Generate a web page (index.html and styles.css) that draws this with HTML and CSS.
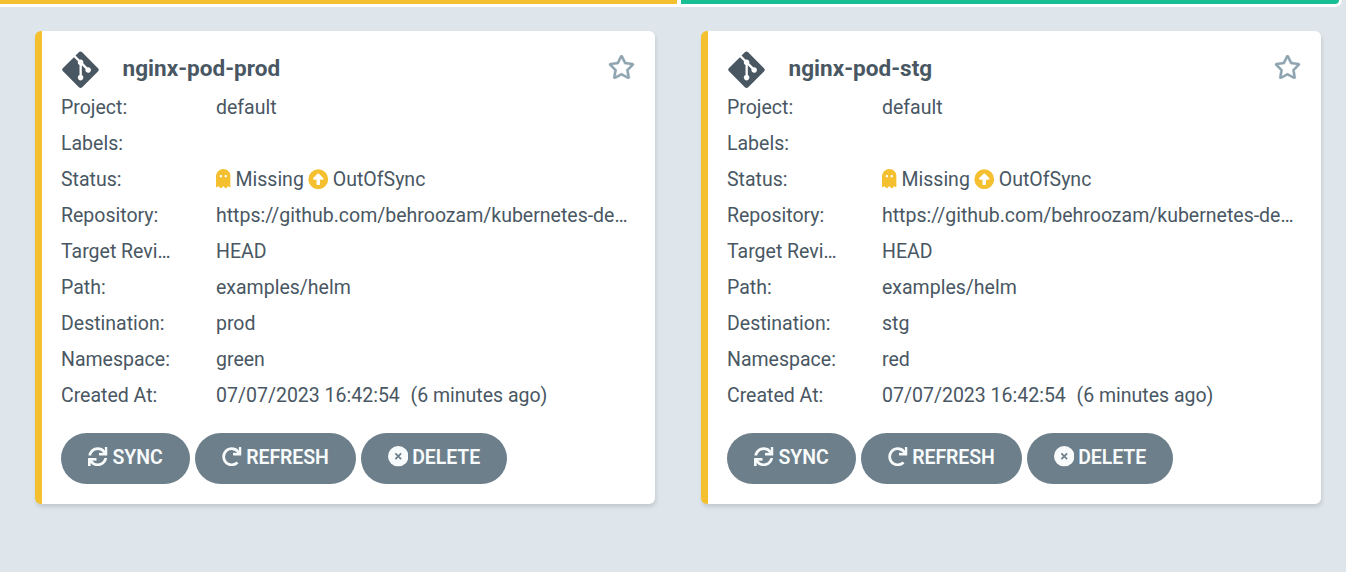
FILE: index.html
```
<!DOCTYPE html>
<html lang="en">
<head>
<meta charset="utf-8">
<title>Applications</title>
<link rel="stylesheet" href="styles.css">
</head>
<body>
<svg class="sprite" aria-hidden="true">
<symbol id="git" viewBox="0 0 448 512"><path d="M439.55 236.05L244 40.45a28.87 28.87 0 0 0-40.81 0l-40.66 40.63 51.52 51.52c27.06-9.14 52.68 16.77 43.39 43.68l49.66 49.66c34.23-11.8 61.18 31 35.47 56.69-26.49 26.49-70.21-2.87-56-37.34L240.22 199v121.85c25.3 12.54 22.26 41.85 9.08 55a34.34 34.34 0 0 1-48.55 0c-17.57-17.6-11.07-46.91 11.25-56v-123c-20.8-8.51-24.6-30.74-18.64-45L142.57 101 8.45 235.14a28.86 28.86 0 0 0 0 40.81l195.61 195.6a28.86 28.86 0 0 0 40.8 0l194.69-194.69a28.86 28.86 0 0 0 0-40.81z"/></symbol>
<symbol id="star" viewBox="0 0 576 512"><path d="M528.1 171.5L382 150.2 316.7 17.8c-11.7-23.6-45.6-23.9-57.4 0L194 150.2 47.9 171.5c-26.2 3.8-36.7 36.1-17.7 54.6l105.7 103-25 145.5c-4.5 26.3 23.2 46 46.4 33.7L288 439.6l130.7 68.7c23.2 12.2 50.9-7.4 46.4-33.7l-25-145.5 105.7-103c19-18.5 8.5-50.8-17.7-54.6zM388.6 312.3l23.7 138.4L288 385.4l-124.3 65.3 23.7-138.4-100.6-98 139-20.2 62.2-126 62.2 126 139 20.2-100.6 98z"/></symbol>
<symbol id="ghost" viewBox="0 0 384 512"><path d="M186.1.09C81.01 3.24 0 94.92 0 200.05v263.92c0 14.26 17.23 21.39 27.31 11.31l24.92-18.53c6.66-4.95 16-3.99 21.51 2.21l42.95 48.35c6.25 6.25 16.38 6.25 22.63 0l40.72-45.85c6.37-7.17 17.56-7.17 23.92 0l40.72 45.85c6.25 6.25 16.38 6.25 22.63 0l42.95-48.35c5.51-6.2 14.85-7.17 21.51-2.21l24.92 18.53c10.08 10.08 27.31 2.94 27.31-11.31V192C384 84 294.83-3.17 186.1.09zM128 224c-17.67 0-32-14.33-32-32s14.33-32 32-32 32 14.33 32 32-14.33 32-32 32zm128 0c-17.67 0-32-14.33-32-32s14.33-32 32-32 32 14.33 32 32-14.33 32-32 32z"/></symbol>
<symbol id="up" viewBox="0 0 512 512"><path fill-rule="evenodd" d="M256 8a248 248 0 1 0 0 496 248 248 0 1 0 0-496zM256 112q9 0 17 7l107 108q12 16 0 30l-10 8q-8 6-17 3h-54v112q0 20-20 20h-46q-20 0-20-20V268h-54q-9 3-17-3l-10-8q-12-14 0-30l107-108q8-7 17-7z"/></symbol>
<symbol id="sync" viewBox="0 0 512 512"><path d="M440.65 12.57l4 82.77A247.16 247.16 0 0 0 255.83 8C134.73 8 33.91 94.92 12.29 209.82A12 12 0 0 0 24.09 224h49.05a12 12 0 0 0 11.67-9.26 175.91 175.91 0 0 1 317-56.94l-101.46-4.86a12 12 0 0 0-12.57 12v47.41a12 12 0 0 0 12 12H500a12 12 0 0 0 12-12V12a12 12 0 0 0-12-12h-47.37a12 12 0 0 0-11.98 12.57zM255.83 432a175.61 175.61 0 0 1-146-77.8l101.8 4.87a12 12 0 0 0 12.57-12v-47.4a12 12 0 0 0-12-12H12a12 12 0 0 0-12 12V500a12 12 0 0 0 12 12h47.35a12 12 0 0 0 12-12.6l-4.15-82.57A247.17 247.17 0 0 0 255.83 504c121.11 0 221.93-86.92 243.55-201.82a12 12 0 0 0-11.8-14.18h-49.05a12 12 0 0 0-11.67 9.26A175.86 175.86 0 0 1 255.83 432z"/></symbol>
<symbol id="redo" viewBox="0 0 512 512"><path d="M500.33 0h-47.41a12 12 0 0 0-12 12.57l4 82.76A247.42 247.42 0 0 0 256 8C119.34 8 7.9 119.53 8 256.19 8.1 393.07 119.1 504 256 504a247.1 247.1 0 0 0 166.18-63.91 12 12 0 0 0 .48-17.43l-34-34a12 12 0 0 0-16.38-.55A176 176 0 1 1 402.1 157.8l-101.53-4.87a12 12 0 0 0-12.57 12v47.41a12 12 0 0 0 12 12h200.33a12 12 0 0 0 12-12V12a12 12 0 0 0-12-12z"/></symbol>
<symbol id="times" viewBox="0 0 20 20"><circle cx="10" cy="10" r="10"/><path d="M7.2 7.2l5.6 5.6M12.8 7.2l-5.6 5.6" stroke="#6d7f8b" stroke-width="1.7"/></symbol>
</svg>
<div class="health-bar"><div class="health-missing"></div><div class="health-ok"></div></div>
<main class="tiles">
<article class="tile">
<header class="tile-head"><svg class="git"><use href="#git"/></svg><h2 class="title">nginx-pod-prod</h2><svg class="star"><use href="#star"/></svg></header>
<dl class="fields">
<dt>Project:</dt><dd>default</dd>
<dt>Labels:</dt><dd></dd>
<dt>Status:</dt><dd class="status"><svg class="ghost"><use href="#ghost"/></svg><span class="health">Missing</span><svg class="up"><use href="#up"/></svg><span>OutOfSync</span></dd>
<dt>Repository:</dt><dd>https://github.com/behroozam/kubernetes-de…</dd>
<dt>Target Revi…</dt><dd>HEAD</dd>
<dt>Path:</dt><dd>examples/helm</dd>
<dt>Destination:</dt><dd>prod</dd>
<dt>Namespace:</dt><dd>green</dd>
<dt>Created At:</dt><dd>07/07/2023 16:42:54 &nbsp;<span class="age">(6 minutes ago)</span></dd>
</dl>
<div class="actions"><button class="btn sync"><svg><use href="#sync"/></svg>SYNC</button><button class="btn refresh"><svg><use href="#redo"/></svg>REFRESH</button><button class="btn delete"><svg><use href="#times"/></svg>DELETE</button></div>
</article>
<article class="tile">
<header class="tile-head"><svg class="git"><use href="#git"/></svg><h2 class="title">nginx-pod-stg</h2><svg class="star"><use href="#star"/></svg></header>
<dl class="fields">
<dt>Project:</dt><dd>default</dd>
<dt>Labels:</dt><dd></dd>
<dt>Status:</dt><dd class="status"><svg class="ghost"><use href="#ghost"/></svg><span class="health">Missing</span><svg class="up"><use href="#up"/></svg><span>OutOfSync</span></dd>
<dt>Repository:</dt><dd>https://github.com/behroozam/kubernetes-de…</dd>
<dt>Target Revi…</dt><dd>HEAD</dd>
<dt>Path:</dt><dd>examples/helm</dd>
<dt>Destination:</dt><dd>stg</dd>
<dt>Namespace:</dt><dd>red</dd>
<dt>Created At:</dt><dd>07/07/2023 16:42:54 &nbsp;<span class="age">(6 minutes ago)</span></dd>
</dl>
<div class="actions"><button class="btn sync"><svg><use href="#sync"/></svg>SYNC</button><button class="btn refresh"><svg><use href="#redo"/></svg>REFRESH</button><button class="btn delete"><svg><use href="#times"/></svg>DELETE</button></div>
</article>
</main>
</body>
</html>
```
FILE: styles.css
```
* { box-sizing: border-box; }
body {
  margin: 0;
  height: 572px;
  overflow: hidden;
  background: #dee6eb;
  color: #495763;
  font-family: Roboto, "Liberation Sans", sans-serif;
  font-size: 19.5px;
}
svg { display: block; flex: none; fill: currentColor; }
.sprite { position: absolute; width: 0; height: 0; }
.health-bar {
  display: flex;
  gap: 4px;
  width: 1342px;
  height: 7px;
  padding: 0 3px 3px 0;
  background: #fff;
  border-bottom-right-radius: 9px;
}
.health-missing { width: 677px; background: #f4c030; }
.health-ok { flex: 1; background: #18be94; border-bottom-right-radius: 6px; }
.tiles { display: flex; gap: 46px; padding: 24px 25px 0 35px; }
.tile {
  width: 620px;
  height: 473px;
  padding: 17px 20px 0 19px;
  border-left: 7px solid #f4c030;
  border-radius: 6px;
  background: #fff;
  box-shadow: 1px 3px 4px rgba(0, 0, 0, .12);
}
.tile-head { display: flex; align-items: center; height: 42px; }
.git { width: 37px; height: 41.5px; margin: 2.2px 0 0 1px; }
.title { flex: 1; margin: 0 0 0 23.6px; font-size: 22.55px; font-weight: 700; line-height: 41px; padding-bottom: 1px; }
.star { width: 27px; height: 24px; margin: 0 .5px 5px 0; color: #8fa4b1; stroke: currentColor; stroke-width: 8px; }
.fields {
  display: grid;
  grid-template-columns: 110px 414px;
  column-gap: 45px;
  grid-auto-rows: 36px;
  margin: 0;
  line-height: 36px;
}
.fields dt, .fields dd { margin: 0; white-space: nowrap; }
.fields .status { display: flex; align-items: center; }
.ghost { width: 14.6px; height: 19.5px; color: #f4c030; margin: 0 4.9px 2px 0; }
.up { width: 20.5px; height: 20.5px; color: #f4c030; margin: 0 4.3px 2px 4.2px; }
.age { margin-left: 1px; }
.actions { display: flex; gap: 5px; margin-top: 19px; }
.btn {
  display: flex;
  align-items: center;
  justify-content: center;
  height: 51px;
  padding: 0 0 2px;
  border: 0;
  border-radius: 26px;
  background: #6d7f8b;
  color: #f8fbfb;
  font: 600 19.5px/49px Roboto, "Liberation Sans", sans-serif;
  letter-spacing: -.08px;
}
.btn svg { width: 19.5px; height: 19.5px; margin: 0 4.5px 2px 0; }
.btn.delete svg { width: 20.5px; height: 20.5px; margin-right: 3.8px; }
.sync { width: 129px; }
.refresh { width: 161px; }
.delete { width: 146px; }
```
